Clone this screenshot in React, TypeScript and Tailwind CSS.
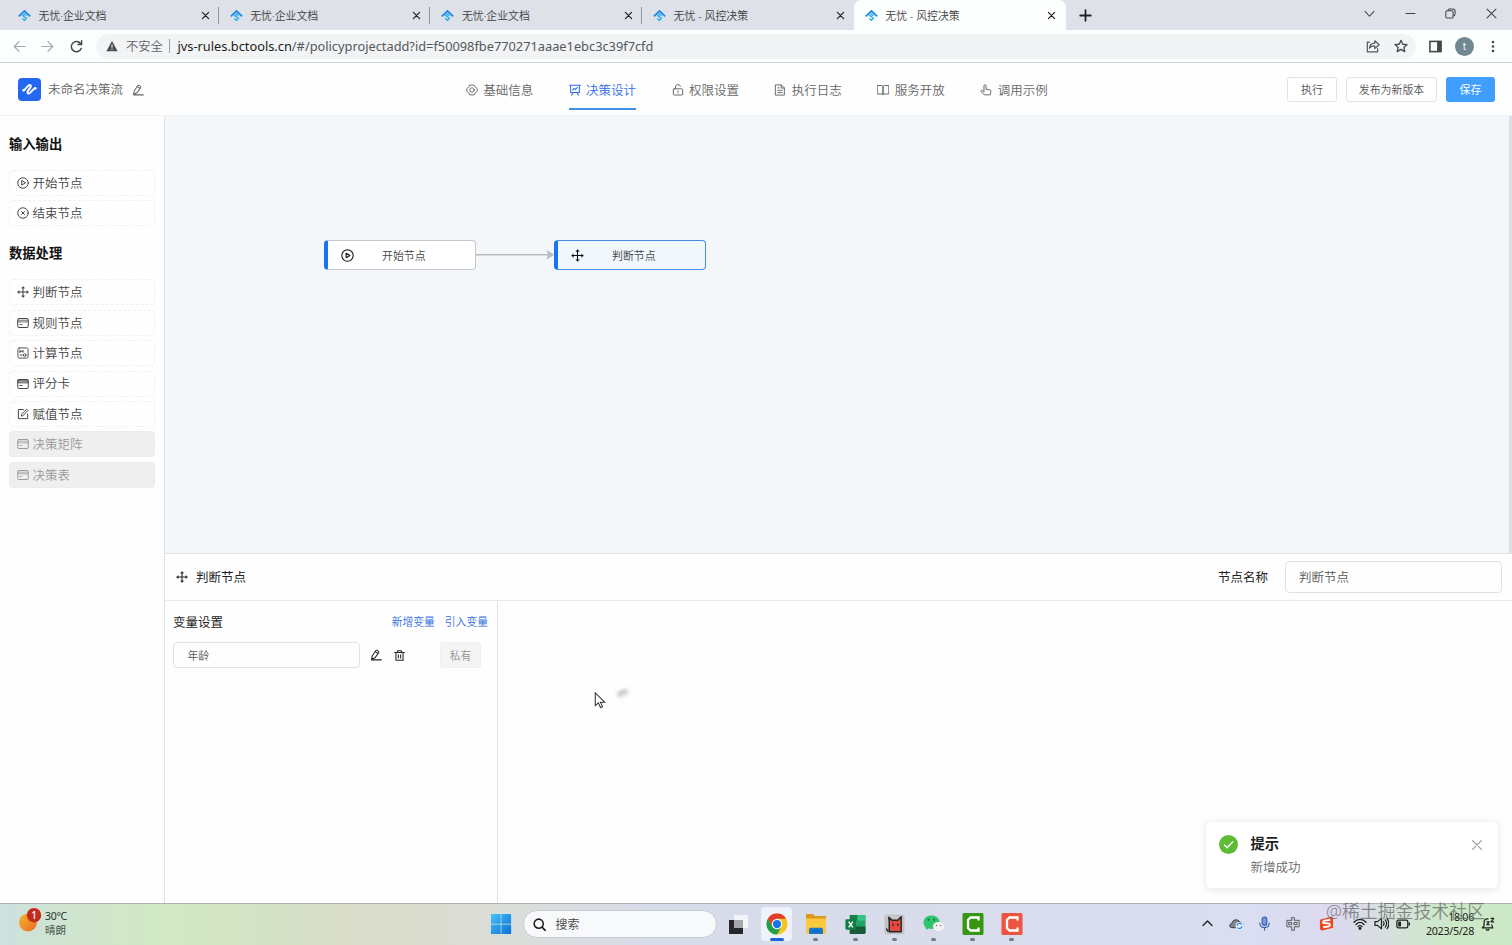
import React from 'react';

type IconProps = { className?: string };
type IconType = (p: IconProps) => React.ReactElement;

const Stroke = ({ className = '', w = 1.2, children }: { className?: string; w?: number; children: React.ReactNode }) => (
  <svg viewBox="0 0 16 16" fill="none" stroke="currentColor" strokeWidth={w} strokeLinecap="round" strokeLinejoin="round" className={`shrink-0 ${className}`}>
    {children}
  </svg>
);

const Favicon = () => (
  <svg viewBox="0 0 16 16" className="h-[13px] w-[13px] shrink-0" fill="none">
    <path d="M1 9 8 2.500 15 9" stroke="#2287e0" strokeWidth="2.300" />
    <path d="M10.600 8.200 8 6.400 5.800 8.300 10.400 11.300 8 13.900 5.200 11.700" stroke="#23b0ee" strokeWidth="1.700" />
  </svg>
);

const PlayCircle: IconType = ({ className }) => (
  <Stroke className={className} w={1.3}><circle cx="8" cy="8" r="7" /><path d="M6.300 5.200v5.600L10.900 8z" /></Stroke>
);
const CloseCircle: IconType = ({ className }) => (
  <Stroke className={className} w={1.3}><circle cx="8" cy="8" r="7" /><path d="m6 6 4 4M10 6l-4 4" /></Stroke>
);
const Move: IconType = ({ className }) => (
  <Stroke className={className} w={1.4}>
    <path d="M8 2v12M2 8h12" />
    <path d="M8 .6 6 3h4zM8 15.400 6 13h4zM.6 8 3 6v4zM15.400 8 13 6v4z" fill="currentColor" strokeWidth=".4" />
  </Stroke>
);
const Card: IconType = ({ className }) => (
  <Stroke className={className} w={1.3}><rect x="1" y="2" width="14" height="12" rx="1.500" /><path d="M1 6.500h14M3.800 10h3M1.500 4.300h13" strokeWidth="1" /></Stroke>
);
const CardFilled: IconType = ({ className }) => (
  <Stroke className={className} w={1.3}><rect x="1" y="2" width="14" height="12" rx="1.500" /><path d="M1.200 2.700h13.600v4H1.200z" fill="currentColor" fillOpacity=".55" strokeWidth=".8" /><path d="M3.800 10h3" /></Stroke>
);
const Calc: IconType = ({ className }) => (
  <Stroke className={className}>
    <rect x="1.200" y="1.200" width="13.600" height="13.600" rx="2" />
    <path d="M4 4.200v3.400M4 5.800h3.800M8 4.500v2.600M4.200 10.800h3" /><circle cx="10.300" cy="10.800" r="1.800" />
  </Stroke>
);
const Edit: IconType = ({ className }) => (
  <Stroke className={className} w={1.3}><path d="M8.500 2H1.800v12.200h12.400V8" /><path d="M6 10.300v-2l6.800-6.700 1.700 1.800-6.600 6.900z" /></Stroke>
);
const Pencil: IconType = ({ className }) => (
  <Stroke className={className} w={1.4}><path d="M2.200 13.800 2.900 9.300 7.800 2c1-1.200 4.600.8 3.900 2.600L6.600 11.800zM7 3.500l4 2.400M2.200 14.500H15" /></Stroke>
);
const Trash: IconType = ({ className }) => (
  <Stroke className={className} w={1.5}><path d="M1 3.700h14M5.200 3.500V1.200h5.600v2.300M2.800 4v11h10.400V4M6.300 6.800v4.800M9.700 6.800v4.800" /></Stroke>
);
const Hexagon: IconType = ({ className }) => (
  <Stroke className={className} w={1.200}><path d="M4.800 1.500h6.400L12 3.800l2.500 1.900.9 2.300-.9 2.300-2.500 1.900-.8 2.300H4.800L4 12.200l-2.500-1.900L.6 8l.9-2.300L4 3.800z" /><circle cx="8" cy="8" r="3" /></Stroke>
);
const Board: IconType = ({ className }) => (
  <Stroke className={className} w={1.400}><path d="M.8 1.700h14.400M2.200 1.700v9.600h11.600V1.700M5.200 11.500 3.600 15M10.800 11.500l1.600 3.500M5 8.200l2-2.300 1.800 1.400 2.400-2.700" /></Stroke>
);
const Lock: IconType = ({ className }) => (
  <Stroke className={className} w={1.300}><rect x="1.800" y="6.400" width="12.400" height="8.300" rx="1" /><path d="M4.600 6.200V4a3.400 3.400 0 0 1 6.600-1M8 9.300v2.400" /></Stroke>
);
const Doc: IconType = ({ className }) => (
  <Stroke className={className} w={1.300}><path d="M2.300 1.200h7.500l4 4v9.600H2.300zM9.600 1.400v4h4M5 8.500h6M5 11.500h6M5 5.200h2" /></Stroke>
);
const Book: IconType = ({ className }) => (
  <Stroke className={className} w={1.300}><path d="M.8 2h5C7.200 2 8 2.500 8 3.500v10.800c0-.6-.8-1-2-1H.8zM15.200 2h-5C8.800 2 8 2.500 8 3.500v10.800c0-.6.8-1 2-1h5.200z" /></Stroke>
);
const Hand: IconType = ({ className }) => (
  <Stroke className={className} w={1.300}><path d="M5.300 10.400V2.300c0-1.800 2.700-1.800 2.700 0v4.600l5.200.9c1 .2 1.500.8 1.400 1.800l-.8 4.800H5.600L1.300 9.900c-.8-1.200.8-2.200 1.800-1.300z" /></Stroke>
);
const Cross: IconType = ({ className }) => (
  <Stroke className={className} w={2.200}><path d="m2.500 2.500 11 11M13.500 2.500l-11 11" /></Stroke>
);

const tabs = ['无忧·企业文档', '无忧·企业文档', '无忧·企业文档', '无忧 - 风控决策', '无忧 - 风控决策'];

function TabStrip() {
  return (
    <div className="flex h-[30px] bg-[#dee1e8] pl-[7.500px]">
      {tabs.map((title, i) => {
        const active = i === 4;
        return (
          <div key={i} className={`flex w-[211.700px] shrink-0 items-center pl-[10.500px] pr-[9.500px] ${active ? 'rounded-t-[7px] bg-[#fdfefe]' : ''}`}>
            <Favicon />
            <span className="ml-[7.500px] flex-1 whitespace-nowrap pt-[2px] text-[10.900px] text-[#3c4043]">{title}</span>
            <Cross className="h-[9px] w-[9px] text-[#222]" />
            {i < 3 && <span className="-mr-[9px] ml-[8px] h-[17px] w-px bg-[#93979d]" />}
          </div>
        );
      })}
      <div className="ml-[13.500px] flex items-center text-[#222]">
        <Stroke className="h-[13px] w-[13px]" w={2.200}><path d="M8 1.500v13M1.500 8h13" /></Stroke>
      </div>
      <div className="ml-auto flex h-[26px] items-center text-[#444]">
        <span className="flex w-[41px] justify-center"><Stroke className="h-[11px] w-[11px]" w={1.500}><path d="m1.500 5 6.500 7 6.500-7" /></Stroke></span>
        <span className="flex w-[40px] justify-center"><Stroke className="h-[11px] w-[11px]" w={1.700}><path d="M1.500 8h13" /></Stroke></span>
        <span className="flex w-[41px] justify-center"><Stroke className="h-[11px] w-[11px]" w={1.500}><rect x="1.200" y="4" width="10.600" height="10.600" rx="2" /><path d="M4.300 3.600c.2-1.600 1-2.200 2.300-2.200h5c2 0 3 1 3 3v4.400c0 1.500-.6 2.600-2.400 2.800" /></Stroke></span>
        <span className="flex w-[41px] justify-center"><Stroke className="h-[11px] w-[11px]" w={1.500}><path d="m1.500 1.500 13 13M14.500 1.500l-13 13" /></Stroke></span>
      </div>
    </div>
  );
}

function AddressBar() {
  return (
    <div className="flex h-[33px] items-center border-b border-[#cdd3d5] bg-[#fdfefe]">
      <Stroke className="ml-[13px] h-[13px] w-[13px] text-[#a5a8ac]" w={1.500}><path d="M15 8H1.500M7.500 2 1.500 8l6 6" /></Stroke>
      <Stroke className="ml-[15px] h-[13px] w-[13px] text-[#a5a8ac]" w={1.500}><path d="M1 8h13.500M8.500 2l6 6-6 6" /></Stroke>
      <Stroke className="ml-[16px] h-[13px] w-[13px] text-[#45484c]" w={1.800}><path d="M13.800 10.500A6.300 6.300 0 1 1 13.300 4.800M14.300 1v4.500H9.800" /></Stroke>
      <div className="ml-[13px] flex h-[25px] w-[1320px] items-center rounded-full bg-[#f1f3f5] pl-[10px]">
        <svg viewBox="0 0 12 12" className="h-[12px] w-[12px]"><path d="M6 1 11.600 11.200H.4z" fill="#484b4f" /><path d="M6 4.400v3.400M6 8.800v1.200" stroke="#f1f3f5" strokeWidth="1.100" /></svg>
        <span className="ml-[8px] w-[37px] whitespace-nowrap pt-[2px] text-[12.300px] text-[#5f6368]">不安全</span>
        <span className="ml-[6px] h-[14px] w-px bg-[#9a9da1]" />
        <span className="ml-[7.500px] flex-1 whitespace-nowrap pt-[1px] text-[12.800px] font-normal text-[#55585c]">
          <span className="text-[#1c1d20]">jvs-rules.bctools.cn</span>/#/policyprojectadd?id=f50098fbe770271aaae1ebc3c39f7cfd
        </span>
        <Stroke className="h-[14px] w-[14px] text-[#55585c]" w={1.400}><path d="M4 3.500H1.500v11.200h11.800V11M4 10.500c.3-3.600 2.300-5.500 6-5.700V2l5 4.500-5 4.300V8C7.300 7.800 5.500 8.600 4 10.500z" /></Stroke>
        <Stroke className="ml-[14px] mr-[8.500px] h-[14px] w-[14px] text-[#45484c]" w={1.500}><path d="m8 1.500 2 4.500 4.900.4-3.700 3.200 1.100 4.800L8 11.900l-4.300 2.500 1.100-4.800L1.100 6.400 6 6z" /></Stroke>
      </div>
      <svg viewBox="0 0 14 14" className="ml-[13px] h-[13px] w-[13px]"><rect x="1" y="1.500" width="12" height="11" fill="none" stroke="#45484c" strokeWidth="1.700" /><path d="M8.700 1.500H13v11H8.700z" fill="#45484c" /></svg>
      <span className="ml-[13px] flex h-[19px] w-[19px] items-center justify-center rounded-full bg-[#718791] text-[10px] font-normal text-white">t</span>
      <svg viewBox="0 0 4 14" className="ml-[17px] h-[13px] w-[4px]" fill="#45484c"><circle cx="2" cy="2.200" r="1.400" /><circle cx="2" cy="7" r="1.400" /><circle cx="2" cy="11.800" r="1.400" /></svg>
    </div>
  );
}

const nav: { label: string; Icon: IconType }[] = [
  { label: '基础信息', Icon: Hexagon },
  { label: '决策设计', Icon: Board },
  { label: '权限设置', Icon: Lock },
  { label: '执行日志', Icon: Doc },
  { label: '服务开放', Icon: Book },
  { label: '调用示例', Icon: Hand },
];

function Header() {
  return (
    <header className="flex h-[53px] items-center border-b border-[#eff1f3] bg-[#fefefe] text-[12.500px] text-[#666]">
      <div className="flex w-[465.800px] items-center pl-[17.500px]">
        <svg viewBox="0 0 23 23" className="h-[23px] w-[23px]">
          <rect width="23" height="23" rx="4" fill="#2468f2" />
          <path d="M5.600 12.300c1.400-.2 4-4.800 5.800-5.200 2-.2 1.700 1.600.6 3-1.300 1.700-3.700 4.200-2 5.400 2 1.200 4.500-4.500 7.300-5.400" fill="none" stroke="#fff" strokeWidth="2" strokeLinecap="round" />
          <circle cx="5.700" cy="12.200" r="1.300" fill="#fff" /><circle cx="17.200" cy="10.200" r="1.300" fill="#fff" />
        </svg>
        <span className="ml-[7.500px] whitespace-nowrap pt-[3px]">未命名决策流</span>
        <Pencil className="ml-[8.500px] mt-[1px] h-[12px] w-[12px]" />
      </div>
      <nav className="flex h-full gap-[35.500px]">
        {nav.map(({ label, Icon }, i) => (
          <div key={label} className={`flex h-[47px] w-[67.400px] items-center justify-between whitespace-nowrap border-b-2 pt-[9px] ${i === 1 ? 'border-[#3f8fe6] text-[#2f6bea]' : 'border-transparent'}`}>
            <Icon className="h-[12px] w-[12px]" />
            <span className="pt-[2px]">{label}</span>
          </div>
        ))}
      </nav>
      <div className="ml-auto mr-[17px] flex gap-[9px] text-[10.900px] text-[#555]">
        <button className="h-[25px] w-[50px] rounded-[3px] border border-[#e1e3e8] bg-white pt-[2px]">执行</button>
        <button className="h-[25px] w-[91px] rounded-[3px] border border-[#e1e3e8] bg-white pt-[2px]">发布为新版本</button>
        <button className="h-[25px] w-[49px] rounded-[3px] bg-[#409eff] pt-[2px] font-normal text-white">保存</button>
      </div>
    </header>
  );
}

function SideItem({ label, Icon, disabled = false }: { label: string; Icon: IconType; disabled?: boolean }) {
  return (
    <div className={`flex h-[26px] items-center gap-[3.500px] rounded-[4px] border pl-[7px] text-[12.500px] ${disabled ? 'border-[#ececec] bg-[#efefef] text-[#999]' : 'border-dashed border-[#f0f0f1] text-[#444]'}`}>
      <Icon className="h-[12px] w-[12px]" />
      <span className="pt-[2.600px]">{label}</span>
    </div>
  );
}

function Sidebar() {
  return (
    <aside className="w-[165px] shrink-0 border-r border-[#dfe2e6] bg-[#fefefe] pl-[9px] pr-[9px]">
      <h2 className="mt-[18px] h-[20px] text-[13.300px] font-bold leading-[20px] text-[#111]">输入输出</h2>
      <div className="mt-[16px] flex flex-col gap-[4.400px]">
        <SideItem label="开始节点" Icon={PlayCircle} />
        <SideItem label="结束节点" Icon={CloseCircle} />
      </div>
      <h2 className="mt-[17px] h-[20px] text-[13.300px] font-bold leading-[20px] text-[#111]">数据处理</h2>
      <div className="mt-[16px] flex flex-col gap-[4.400px]">
        <SideItem label="判断节点" Icon={Move} />
        <SideItem label="规则节点" Icon={Card} />
        <SideItem label="计算节点" Icon={Calc} />
        <SideItem label="评分卡" Icon={CardFilled} />
        <SideItem label="赋值节点" Icon={Edit} />
        <SideItem label="决策矩阵" Icon={Card} disabled />
        <SideItem label="决策表" Icon={Card} disabled />
      </div>
    </aside>
  );
}

function Canvas() {
  return (
    <div className="relative h-[437px] overflow-hidden bg-[#f4f7fa]">
      <div className="absolute left-[159px] top-[124px] flex h-[30px] w-[152px] items-center rounded-[4px] border border-l-4 border-[#c3c7cd] border-l-[#1a73f0] bg-white pl-[13px] text-[10.900px] text-[#444]">
        <PlayCircle className="h-[13px] w-[13px] text-[#111]" />
        <span className="ml-[28px] pt-[3px]">开始节点</span>
      </div>
      <svg className="absolute left-[311px] top-[132px] h-[14px] w-[80px]" viewBox="0 0 80 14" fill="none" stroke="#b9bbbf">
        <path d="M0 6.700h76" strokeWidth="1.400" /><path d="m71 2.700 6.500 4-6.500 4.100 2-4.100z" fill="#b9bbbf" strokeWidth="1" />
      </svg>
      <div className="absolute left-[389px] top-[124px] flex h-[30px] w-[152px] items-center rounded-[4px] border border-l-4 border-[#4290e6] border-l-[#1a73f0] bg-[#f0f7fd] pl-[13px] text-[10.900px] text-[#444]">
        <Move className="h-[13px] w-[13px] text-[#111]" />
        <span className="ml-[28px] pt-[3px]">判断节点</span>
      </div>
      <div className="absolute right-0 top-0 h-full w-[3px] bg-[#dcdfe3]" />
    </div>
  );
}

function NodePanel() {
  return (
    <section className="flex flex-1 flex-col border-t border-[#e1e4e8] bg-[#fefefe]">
      <div className="flex h-[47px] shrink-0 items-center border-b border-[#e6e8eb] pl-[11px] pr-[10px] text-[12.500px] font-normal text-[#222]">
        <Move className="h-[12px] w-[12px]" />
        <span className="ml-[8px] pt-[2px]">判断节点</span>
        <span className="ml-auto pt-[2px]">节点名称</span>
        <div className="ml-[17px] flex h-[32px] w-[217px] items-center rounded-[4px] border border-[#dfe2e8] pl-[13px] pt-[2px] font-[350] text-[#555]">判断节点</div>
      </div>
      <div className="flex flex-1">
        <div className="w-[333px] border-r border-[#dfe2e6] pl-[8px]">
          <div className="mt-[11px] flex h-[20px] items-center pr-[9px]">
            <span className="pt-[2px] text-[12.500px] font-normal text-[#222]">变量设置</span>
            <span className="ml-auto pt-[1px] text-[10.800px] text-[#2f6fe0]">新增变量</span>
            <span className="ml-[10px] pt-[1px] text-[10.800px] text-[#2f6fe0]">引入变量</span>
          </div>
          <div className="mt-[10px] flex h-[26px] items-center">
            <div className="flex h-[26px] w-[187px] items-center rounded-[4px] border border-[#dfe2e8] pl-[13.500px] pt-[2px] text-[10.800px] text-[#555]">年龄</div>
            <Pencil className="ml-[10px] h-[12px] w-[12px] text-[#222]" />
            <Trash className="ml-[12px] h-[11px] w-[11px] text-[#222]" />
            <div className="ml-[35px] flex h-[26px] w-[41px] items-center justify-center rounded-[3px] border border-[#f0f0f1] bg-[#f4f4f5] pt-[2px] text-[10.800px] text-[#909399]">私有</div>
          </div>
        </div>
      </div>
    </section>
  );
}

function Toast() {
  return (
    <div className="absolute left-[1206px] top-[822px] flex h-[66px] w-[292px] rounded-[6px] bg-white pl-[13px] pt-[12px] shadow-[0_1px_9px_rgba(0,0,0,0.11)]">
      <svg viewBox="0 0 20 20" className="mt-[1px] h-[19px] w-[19px]"><circle cx="10" cy="10" r="10" fill="#5dbb35" /><path d="m5.400 10.200 3.200 3.200 6.200-6.500" fill="none" stroke="#fff" strokeWidth="1.500" /></svg>
      <div className="ml-[12.500px] flex-1">
        <div className="h-[20px] text-[14.300px] font-bold leading-[20px] text-[#222]">提示</div>
        <div className="mt-[4px] text-[12.500px] leading-[20px] text-[#666]">新增成功</div>
      </div>
      <Stroke className="mr-[16px] mt-[6px] h-[10px] w-[10px] text-[#909399]" w={1.700}><path d="m1 1 14 14M15 1 1 15" /></Stroke>
    </div>
  );
}

function Slot({ children, active = false, dot = true }: { children: React.ReactNode; active?: boolean; dot?: boolean }) {
  return (
    <div className="flex w-[39.200px] shrink-0 flex-col items-center">
      <div className={`mt-[3px] flex h-[34px] items-center justify-center rounded-[4px] ${active ? 'w-[31px] bg-[#eff2fa]' : 'w-[33px]'}`}>{children}</div>
      {active ? <span className="-mt-[3px] h-[3px] w-[14px] rounded-full bg-[#1b68d2]" /> : <span className={`-mt-[3px] h-[3px] w-[5px] rounded-full ${dot ? 'bg-[#777b88]' : ''}`} />}
    </div>
  );
}

function Taskbar() {
  return (
    <footer className="relative flex h-[42px] shrink-0 border-t border-[#aeb2b3] bg-[linear-gradient(90deg,#cde1df_0px,#d0e5cf_70px,#d1e9c3_170px,#d4e2c6_270px,#dbdccb_380px,#dbddd5_480px,#d9ddde_560px,#d7dcea_650px,#d8dcec_1000px,#d9def2_1250px,#dcd9ee_1340px,#d4e2d9_1400px,#cce9c7_1450px,#cde8c5_1512px)]">
      <div className="flex w-[490px] pl-[19px] pt-[4px]">
        <svg viewBox="0 0 23 26" className="h-[26px] w-[23px]">
          <defs><linearGradient id="sun" x1="0" y1="0" x2="1" y2="1"><stop stopColor="#f5b32d" /><stop offset="1" stopColor="#ee6b20" /></linearGradient></defs>
          <circle cx="9" cy="14.500" r="9" fill="url(#sun)" /><circle cx="15" cy="7.200" r="7.200" fill="#c42b1c" />
          <text x="15" y="10.700" textAnchor="middle" fontSize="10" fontWeight="500" fill="#fff">1</text>
        </svg>
        <div className="ml-[3px] pt-[1px] text-[10.500px] font-normal leading-[14px] text-[#26302c]"><div className="tracking-[-0.300px]">30°C</div><div className="text-[#46504b]">晴朗</div></div>
      </div>
      <svg viewBox="0 0 22 22" className="mt-[9px] h-[22px] w-[22px]">
        <defs><linearGradient id="win" x1="0" y1="0" x2="1" y2="1"><stop stopColor="#45c3fa" /><stop offset="1" stopColor="#0a6fd8" /></linearGradient></defs>
        <path d="M1 1h9.700v9.700H1zM11.400 1h9.700v9.700h-9.700zM1 11.400h9.700v9.700H1zM11.400 11.400h9.700v9.700h-9.700z" fill="url(#win)" />
      </svg>
      <div className="ml-[11px] mt-[6px] flex h-[28px] w-[194px] items-center rounded-full border border-[#c9ccd4] bg-[#f8f9fb] pl-[9px] text-[12px] text-[#444]">
        <Stroke className="h-[13px] w-[13px] text-[#1d1d1f]" w={1.900}><circle cx="7" cy="7" r="5.600" /><path d="m11.200 11.200 3.800 4" /></Stroke>
        <span className="ml-[9.500px] pt-[1px]">搜索</span>
      </div>
      <div className="flex pl-[1px]">
        <Slot dot={false}><svg viewBox="0 0 20 20" className="h-[20px] w-[20px]"><path d="M1 6h14v14H1z" fill="#26272b" /><path d="M6 1h14v13H6z" fill="#f4f5f8" /><path d="M6 6h9v8H6z" fill="#a5a7ad" /></svg></Slot>
        <Slot active>
          <svg viewBox="0 0 24 24" className="h-[22px] w-[22px]">
            <circle cx="12" cy="12" r="11.500" fill="#f8c51c" />
            <path d="M2 6.300A11.500 11.500 0 0 1 22 6.300H12L7 15z" fill="#e33b2e" />
            <path d="M2 6.300 7 14.900 12 17.500 17 14.900 12 23.500A11.500 11.500 0 0 1 2 6.300z" fill="#1fa04c" />
            <circle cx="12" cy="12" r="5.700" fill="#fff" /><circle cx="12" cy="12" r="4.500" fill="#1a73e8" />
          </svg>
        </Slot>
        <Slot><svg viewBox="0 0 22 22" className="h-[22px] w-[22px]"><path d="M1 1h7l2 2h11v16H1z" fill="#dd9a20" /><path d="M1 5.500h20V21H1z" fill="#fbc940" /><path d="M4 21v-4.500q0-1.700 1.700-1.700h10.600q1.700 0 1.700 1.700V21z" fill="#1877cf" /><path d="M7.500 17.500h7v1h-7z" fill="#0c58a3" /></svg></Slot>
        <Slot><svg viewBox="0 0 22 22" className="h-[21px] w-[21px]"><rect x="5" y="1" width="16.500" height="20" rx="1.500" fill="#21a366" /><path d="M5 1h8v6H5z" fill="#128147" /><path d="M13 1h8.500v6H13z" fill="#35c481" /><path d="M5 13h16.500v6.500q0 1.500-1.500 1.500H5z" fill="#185c37" /><rect x=".5" y="5.500" width="11" height="11" rx="1" fill="#107c41" /><path d="m3.800 8 4.400 6M8.200 8l-4.400 6" stroke="#fff" strokeWidth="1.500" /></svg></Slot>
        <Slot><svg viewBox="0 0 22 22" className="h-[21px] w-[21px]"><rect x=".5" y=".5" width="21" height="21" rx="2" fill="#c5c4c4" /><path d="M5.500 18.500V8L5 3.500 8.500 6.500h6L18 3v15.500z" fill="#e74940" stroke="#222" strokeWidth="1.500" strokeLinejoin="round" /><path d="M9.500 10v2.500M14.500 10v2.500" stroke="#222" strokeWidth="1.300" /><path d="M5 18q-2 0-2.300-3" stroke="#222" fill="none" strokeWidth="1.300" /></svg></Slot>
        <Slot><svg viewBox="0 0 22 22" className="h-[22px] w-[22px]"><path d="M3 15.500.8 11.500C-.5 6 3.500 2.500 8.500 2.500S17 6 16.500 9.500 12 16 8.500 16l-3-.5L3 17z" fill="#2fc56f" /><circle cx="5.500" cy="6.800" r="1" fill="#176b3d" /><circle cx="11" cy="6.800" r="1" fill="#176b3d" /><ellipse cx="15.500" cy="13.500" rx="5.500" ry="4.500" fill="#f3f3f3" /><circle cx="13.500" cy="12.500" r=".8" fill="#777" /><circle cx="17.500" cy="12.500" r=".8" fill="#777" /></svg></Slot>
        <Slot><svg viewBox="0 0 22 22" className="h-[22px] w-[22px]"><rect x=".5" y="0" width="21" height="22" rx="1.500" fill="#37960f" /><path d="M16.500 7.500v-3h-8L6 7v8l2.500 2.500h8v-3" fill="none" stroke="#fff" strokeWidth="2.300" /></svg></Slot>
        <Slot><svg viewBox="0 0 22 22" className="h-[22px] w-[22px]"><rect x=".5" y="0" width="21" height="22" rx="1.500" fill="#ee5540" /><path d="M16.500 7.500v-3h-8L6 7v8l2.500 2.500h8v-3" fill="none" stroke="#fff" strokeWidth="2.300" /></svg></Slot>
      </div>
      <div className="ml-auto flex items-center pb-[2px] text-[#222]">
        <span className="flex w-[29px] justify-center"><Stroke className="h-[11px] w-[11px]" w={2}><path d="m1.500 11 6.500-6.500 6.500 6.500" /></Stroke></span>
        <span className="flex w-[28px] justify-center">
          <svg viewBox="0 0 16 14" className="h-[13px] w-[15px]"><path d="M3 11.500C0 11.500 0 7.500 3 7c.5-4.500 6.500-5.500 8.500-1.500 2 0 3.500 1.500 3.500 3l-2 3z" fill="#85878b" stroke="#333" /><circle cx="11.300" cy="9.600" r="4.300" fill="#e6effb" /><path d="M8.500 9.500a2.800 2.800 0 0 1 5-1.500M14 9.800a2.800 2.800 0 0 1-5 1.500" fill="none" stroke="#2b80df" strokeWidth="1.200" /></svg>
        </span>
        <span className="flex w-[29px] justify-center text-[#3c5aa0]"><Stroke className="h-[15px] w-[15px]" w={1.200}><rect x="5.500" y="1" width="5" height="9" rx="2.500" fill="#6f9be8" /><path d="M3 7.500c0 6.500 10 6.500 10 0M8 12.500V15" /></Stroke></span>
        <span className="flex w-[28px] justify-center text-[#555]"><Stroke className="h-[14px] w-[14px]" w={1.100}><path d="M6.500.8h3v3H15v7.400H9.500v4h-3v-4H1V3.800h5.500zM3.400 6.200h3.100v2.600H3.400zM9.500 6.200h3.100v2.600H9.500z" /></Stroke></span>
        <span className="flex w-[39px] justify-center"><svg viewBox="0 0 16 16" className="h-[15px] w-[15px]"><path d="m1 4 12.500-3.500q1.500 0 1.500 1.500v10.500L3.500 15.500Q1 15.500 1 13z" fill="#ec4a24" /><path d="M12 4 6 5q-2 .7-1.500 2.300l6.500.8q1.500 1.600-.5 2.900L4.500 12" fill="none" stroke="#fff" strokeWidth="1.900" /></svg></span>
        <span className="ml-[3px] flex w-[22px] justify-center"><Stroke className="h-[14px] w-[14px]" w={1.400}><path d="M1 6c4-4.300 10-4.300 14 0M3.300 8.600c3-3 6.400-3 9.400 0M5.600 11c1.700-1.500 3.100-1.500 4.800 0" /><circle cx="8" cy="13.200" r="1" fill="currentColor" /></Stroke></span>
        <span className="flex w-[21px] justify-center"><Stroke className="h-[15px] w-[15px]" w={1.300}><path d="M1 6v4h2.700L8 13.500v-11L3.700 6zM10 6c1 1.300 1 2.700 0 4M12 4.200c2 2.500 2 5.100 0 7.600M14 2.500c2.300 3.500 2.300 7.500 0 11" /></Stroke></span>
        <span className="flex w-[22px] justify-center"><Stroke className="h-[14px] w-[14px]" w={1.500}><rect x="1" y="3.500" width="12.500" height="9" rx="2" /><path d="M3.300 6h1.700v4H3.300z" fill="currentColor" /><path d="M15.300 7v2" /></Stroke></span>
        <div className="w-[60px] whitespace-nowrap text-right text-[10.700px] font-normal leading-[14px] tracking-[-0.300px]"><div>18:06</div><div>2023/5/28</div></div>
        <Stroke className="ml-[7px] mr-[17px] h-[14px] w-[14px]" w={1.400}><path d="M8 2.200C4.500 2 3.500 4 3.500 6v4L1.500 12.500h12L12.500 10V9M6 14.300q1.500 1.500 3 0M6.800 5.500h2.500l-2.500 3.300h2.500M11.500 1.500h3l-3 4h3" /></Stroke>
      </div>
      <div className="absolute left-[1326px] top-[-4px] whitespace-nowrap text-[17.900px] leading-[22px] text-[#666]/75">@稀土掘金技术社区</div>
    </footer>
  );
}

export default function App() {
  return (
    <div className="relative flex h-[945px] w-[1512px] flex-col overflow-hidden bg-[#fefefe] font-['Noto_Sans','Noto_Sans_CJK_SC',sans-serif] font-[350]">
      <TabStrip />
      <AddressBar />
      <Header />
      <main className="flex min-h-0 flex-1">
        <Sidebar />
        <div className="flex min-w-0 flex-1 flex-col">
          <Canvas />
          <NodePanel />
        </div>
      </main>
      <Taskbar />
      <Toast />
      <svg viewBox="0 0 12 18" className="absolute left-[594px] top-[692px] h-[17px] w-[12px]"><path d="M1 1v13.500l3.300-3 2.200 5 2.200-1-2.200-4.700H11z" fill="#fff" stroke="#333" strokeWidth="1.100" /></svg>
      <div className="absolute left-[617px] top-[690px] h-[8px] w-[12px] -rotate-[25deg] rounded-full bg-gradient-to-b from-[#b8b8b8] to-[#fafafa] blur-[1.500px]" />
    </div>
  );
}
